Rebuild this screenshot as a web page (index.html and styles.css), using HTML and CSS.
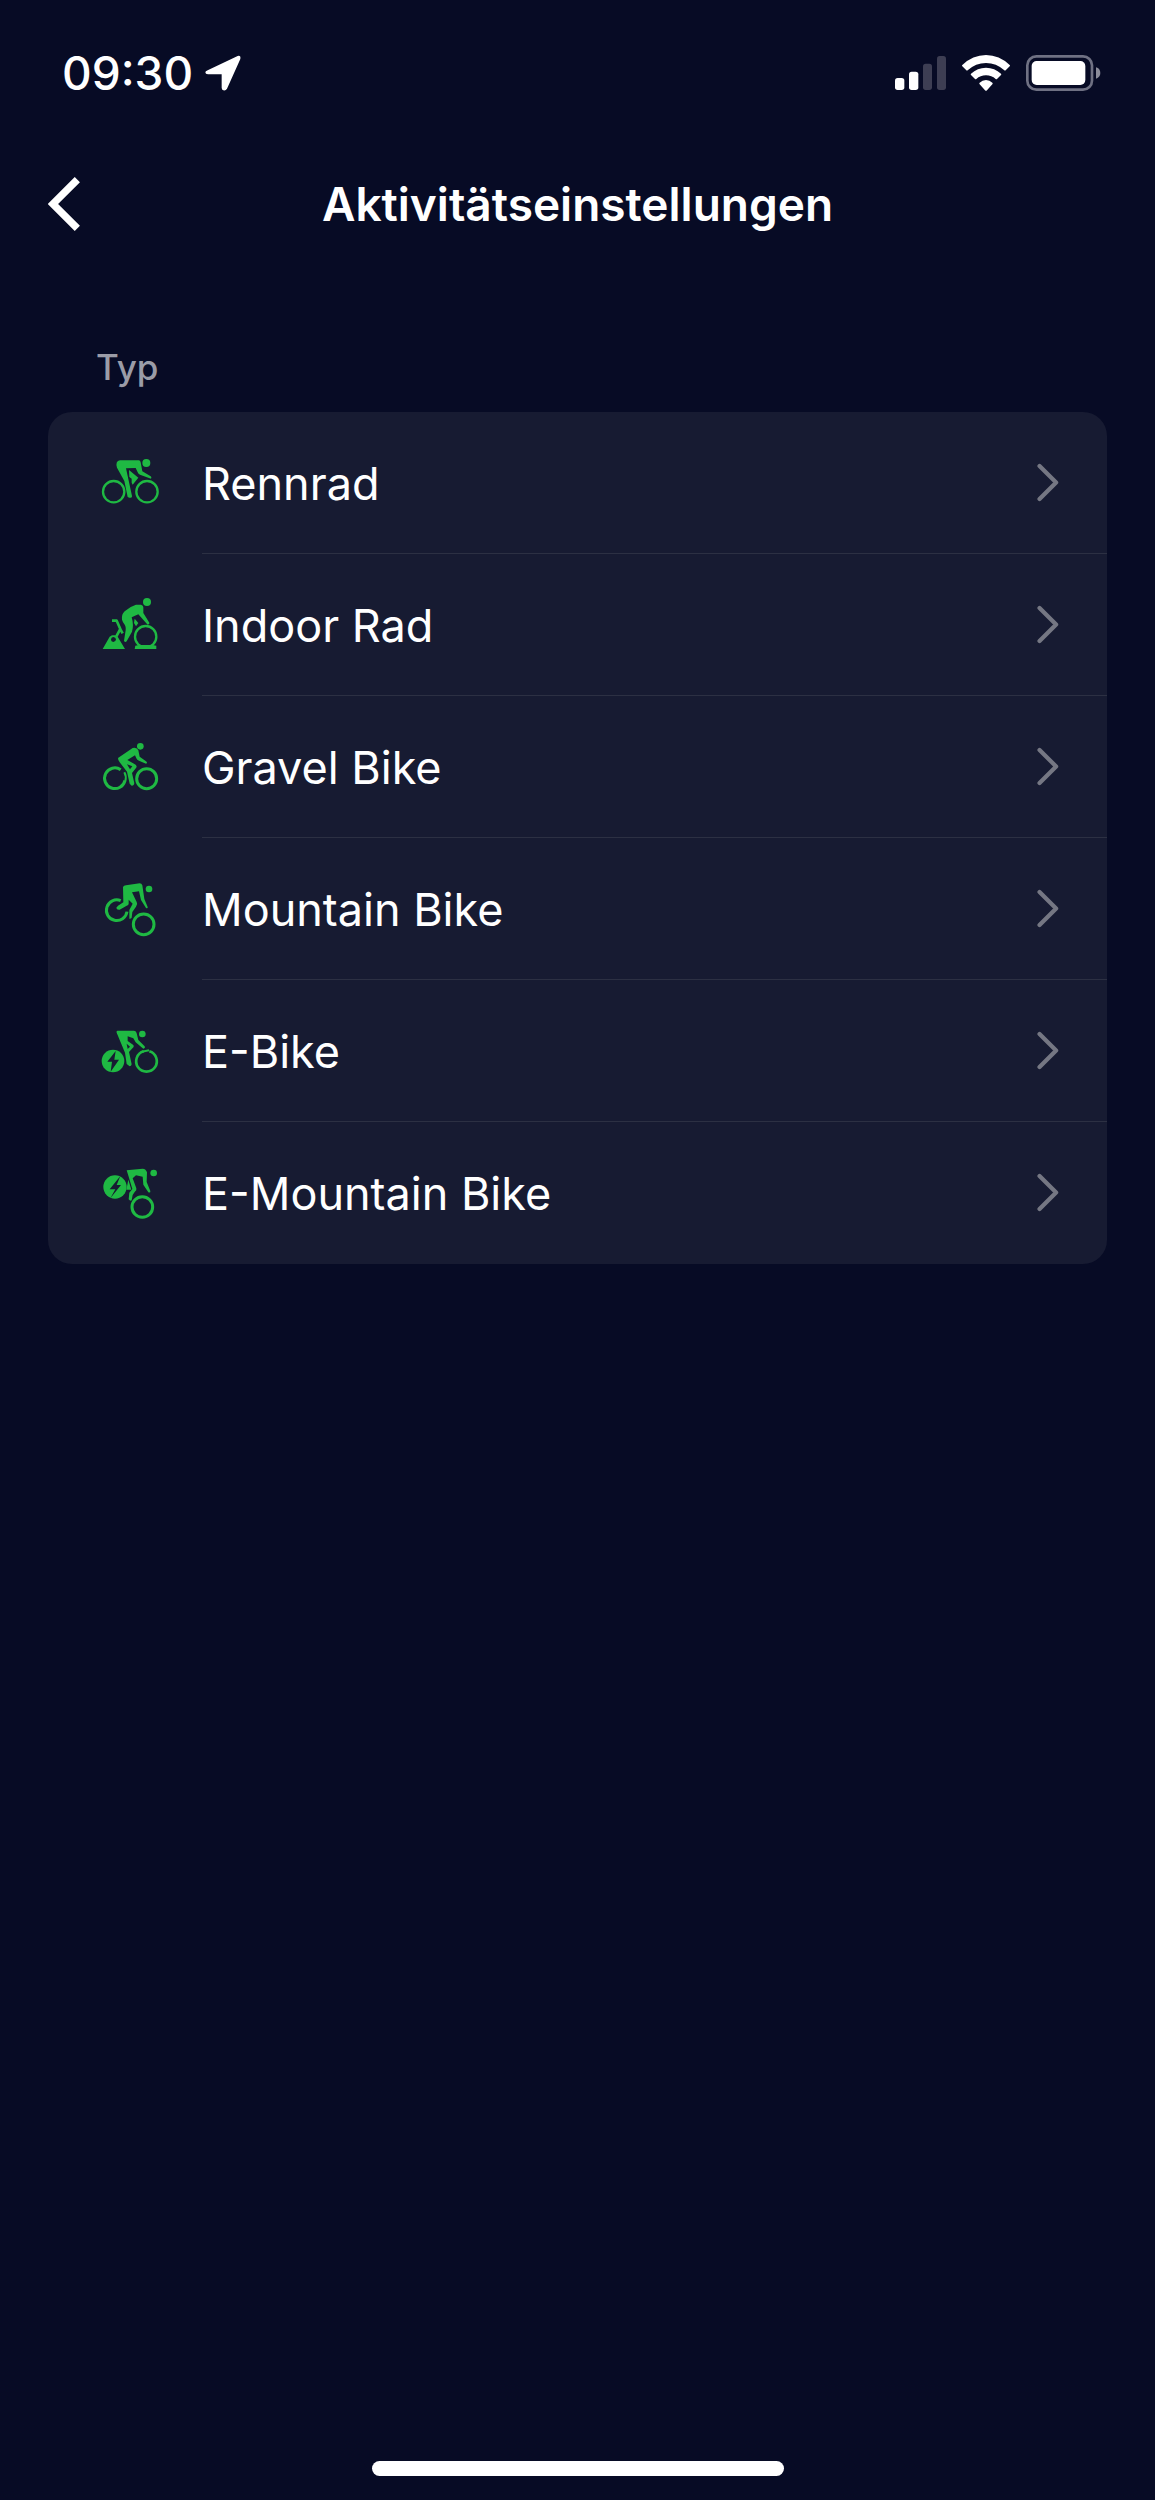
FILE: index.html
```html
<!DOCTYPE html>
<html lang="de">
<head>
<meta charset="utf-8">
<meta name="viewport" content="width=device-width, initial-scale=1">
<title>Aktivitätseinstellungen</title>
<link rel="stylesheet" href="styles.css">
</head>
<body>
<div class="status-bar">
  <div class="status-left">
    <time>09:30</time>
    <svg width="36" height="36" viewBox="0 0 108 108" aria-hidden="true"><path d="M8 46L98 3Q108 0 106 12L66 101Q62 108 55 106Q50 105 50 98V58H9Q1 58 1 52Q1 49 8 46Z" fill="#fff"/></svg>
  </div>
  <div class="status-right">
    <svg width="51" height="36" viewBox="0 -3 153 108" aria-hidden="true">
      <rect x="0" y="66" width="28" height="36" rx="8" fill="#fff"/><rect x="42" y="47" width="28" height="55" rx="8" fill="#fff"/>
      <rect x="84" y="23" width="27" height="79" rx="8" fill="#3d3e53"/><rect x="126" y="0" width="27" height="102" rx="8" fill="#3d3e53"/>
    </svg>
    <svg width="48" height="36" viewBox="0 0 144 108" aria-hidden="true" fill="#fff">
      <path d="M1 30Q32 0 72 0T143 30Q145 32 143 34L131 46Q129 48 127 46Q103 24 72 24T17 46Q15 48 13 46L1 34Q-1 32 1 30Z"/>
      <path d="M27 56Q46 38 72 38T117 56Q119 58 117 60L105 72Q103 74 101 72Q89 61 72 61T43 72Q41 74 39 72L27 60Q25 58 27 56Z"/>
      <path d="M53 83Q61 75 72 75T91 83Q93 85 91 88L75 106Q72 109 69 106L53 88Q51 85 53 83Z"/>
    </svg>
    <svg width="75" height="36" viewBox="0 0 225 108" aria-hidden="true">
      <rect x="4" y="4" width="194" height="100" rx="27" fill="none" stroke="#6f7183" stroke-width="8"/>
      <rect x="17" y="18" width="161" height="72" rx="15" fill="#fff"/><path d="M210 37Q223 41 223 54T210 71Z" fill="#8b8c9a"/>
    </svg>
  </div>
</div>
<header class="nav-bar">
  <button class="back" type="button" aria-label="Zurück">
    <svg width="33" height="54" viewBox="0 0 99 162" aria-hidden="true"><path d="M88 8L15 81L88 154" fill="none" stroke="#fff" stroke-width="22"/></svg>
  </button>
  <h1>Aktivitätseinstellungen</h1>
</header>
<main>
  <h2>Typ</h2>
  <ul class="list">
    <li><a href="#rennrad">
      <svg class="icon" viewBox="0 9 240 210" aria-hidden="true">
        <g fill="none" stroke-width="7"><circle cx="71" cy="140" r="32"/><circle cx="171" cy="140" r="32"/></g>
        <g stroke="none"><circle cx="169" cy="54" r="12"/><path d="M90 46H146Q151 46 152 52L157 79L182 94Q186 97 183 101L150 89Q145 87 143 82L137 69L108 70L126 153Q127 158 122 158H118L113 156L103 108L81 68Q75 49 90 46Z"/><path d="M117 75L145 98L128 119L125 113V101L118 96Z"/></g>
      </svg><span class="label">Rennrad</span><svg class="chevron" viewBox="0 0 66 120" aria-hidden="true"><path d="M7 9L58 60L7 111"/></svg></a></li>
    <li><a href="#indoor-rad">
      <svg class="icon" viewBox="0 9 240 210" aria-hidden="true">
        <circle cx="167" cy="149" r="32" fill="none" stroke-width="7"/>
        <g stroke="none"><circle cx="171" cy="45" r="12"/><path d="M96 98Q94 82 104 73Q120 58 138 53H153Q160 55 160 61V78L178 107Q180 112 173 113L145 82L125 91Q132 114 126 134L110 163Q105 168 102 161L107 130Q109 117 99 106Z"/><path d="M134 95L145 108L138 118L132 108Z"/><path d="M136 176L146 174H188L199 176V186H134Z"/><path fill-rule="evenodd" d="M38 186L59 149L66 145H76L83 149L105 186ZM70 150Q63 151 63 158Q63 164 70 165Q78 164 78 157Q77 151 70 150Z"/></g>
        <path d="M66 101H80L91 126L79 148M90 125L98 139" fill="none" stroke-width="8" stroke-linejoin="round"/>
      </svg><span class="label">Indoor Rad</span><svg class="chevron" viewBox="0 0 66 120" aria-hidden="true"><path d="M7 9L58 60L7 111"/></svg></a></li>
    <li><a href="#gravel-bike">
      <svg class="icon" viewBox="0 6 240 210" aria-hidden="true">
        <g fill="none" stroke-width="9"><path d="M92 119A31 31 0 1 0 105 151"/><circle cx="170" cy="146" r="30"/></g>
        <path d="M103 127Q110 139 106 153" fill="none" stroke-width="6"/>
        <g stroke="none"><circle cx="151" cy="49" r="10"/><path d="M84 84L128 54Q141 51 145 61L149 80L168 94Q174 99 168 101L147 92Q141 90 139 85L135 76L112 90L132 101Q144 107 138 114L126 129L133 160Q132 168 125 167L119 161L111 125L89 97Q84 92 84 84Z"/></g>
        <path class="cutout" d="M111 103L127 109L120 118Z"/>
      </svg><span class="label">Gravel Bike</span><svg class="chevron" viewBox="0 0 66 120" aria-hidden="true"><path d="M7 9L58 60L7 111"/></svg></a></li>
    <li><a href="#mountain-bike">
      <svg class="icon" viewBox="0 3 240 210" aria-hidden="true">
        <g fill="none" stroke-width="9"><path d="M92 83A31 31 0 1 0 111 116"/><circle cx="161" cy="154" r="31"/></g>
        <g stroke="none"><circle cx="177" cy="48" r="10"/><path d="M99 42Q101 37 108 37L149 31Q155 31 157 37L163 78L173 102Q174 107 168 105L153 81L147 55L126 58L140 87Q144 93 138 101L127 117L125 134Q123 138 118 137V111L128 92L116 80V92Q116 96 110 98L89 110Q79 111 79 104L84 98L100 88Z"/></g>
      </svg><span class="label">Mountain Bike</span><svg class="chevron" viewBox="0 0 66 120" aria-hidden="true"><path d="M7 9L58 60L7 111"/></svg></a></li>
    <li><a href="#e-bike">
      <svg class="icon" viewBox="0 0 240 210" aria-hidden="true">
        <path d="M178 106A31 31 0 1 1 161 106" fill="none" stroke-width="8"/><path d="M156 107L177 103" stroke-width="6"/>
        <g stroke="none"><circle cx="69" cy="135" r="34"/><circle cx="157" cy="54" r="10"/><path d="M82 44H132Q139 45 140 52L145 72L164 91Q167 97 160 98L137 79L130 67L113 61L113 75L129 86Q134 90 128 96L117 108L125 145Q124 151 119 151L110 144L105 110L80 50Q78 46 82 44Z"/></g>
        <path class="cutout" d="M77 105L52 137H66L62 167L87 131H73Z"/><path class="cutout" d="M110 83L120 92L113 99Z"/>
      </svg><span class="label">E-Bike</span><svg class="chevron" viewBox="0 0 66 120" aria-hidden="true"><path d="M7 9L58 60L7 111"/></svg></a></li>
    <li><a href="#e-mountain-bike">
      <svg class="icon" viewBox="0 0 240 210" aria-hidden="true">
        <circle cx="157" cy="147" r="31" fill="none" stroke-width="9"/>
        <g stroke="none"><circle cx="75" cy="87" r="35"/><circle cx="191" cy="45" r="10"/><path d="M110 37L158 32Q168 33 171 43L170 72L181 99Q182 105 175 103L160 80L158 56L138 52L128 61L139 91Q141 97 134 102L128 111L125 127Q121 131 116 124L118 104L127 93L116 56Z"/><path d="M115 65L124 95H109Z"/></g>
        <path class="cutout" d="M91 54L59 94H76L61 121L93 81H80Z"/>
      </svg><span class="label">E-Mountain Bike</span><svg class="chevron" viewBox="0 0 66 120" aria-hidden="true"><path d="M7 9L58 60L7 111"/></svg></a></li>
  </ul>
</main>
<div class="home-indicator"></div>
</body>
</html>
```
FILE: styles.css
```css
* { box-sizing: border-box; }

body {
  margin: 0;
  min-height: 100vh;
  display: flex;
  flex-direction: column;
  background: #070b25;
  color: #fff;
  font-family: Inter, "Liberation Sans", sans-serif;
}

svg { display: block; flex: none; }

.status-bar {
  display: flex;
  justify-content: space-between;
  align-items: center;
  height: 146px;
  padding: 0 54px 0 62px;
}

.status-left { display: flex; align-items: center; gap: 12px; }
.status-left time { font-size: 46px; font-weight: 500; line-height: 56px; }
.status-right { display: flex; align-items: center; gap: 16px; }

.nav-bar {
  display: grid;
  grid-template-columns: 48px 1fr 48px;
  align-items: center;
  height: 116px;
  padding: 0 48px;
}

.back { padding: 0; border: 0; background: none; }

h1 {
  margin: 0;
  font-size: 46px;
  font-weight: 600;
  line-height: 56px;
  text-align: center;
  white-space: nowrap;
}

main { padding: 82px 48px 48px; }

h2 {
  margin: 0 0 22px;
  padding-left: 48px;
  color: #9b9ca7;
  font-size: 35px;
  font-weight: 500;
  line-height: 46px;
}

.list {
  margin: 0;
  padding: 0;
  list-style: none;
  border-radius: 24px;
  background: #171b32;
}

.list a {
  display: flex;
  align-items: center;
  padding-left: 42px;
  color: inherit;
  text-decoration: none;
}

.icon {
  width: 80px;
  height: 70px;
  margin-right: 32px;
  fill: #1fb943;
  stroke: #1fb943;
}

.cutout { fill: #171b32; stroke: none; }

.label {
  flex: 1;
  padding-top: 2px;
  font-size: 45px;
  line-height: 139px;
  border-bottom: 1px solid #2c3043;
}

.chevron {
  align-self: stretch;
  width: 70px;
  height: 142px;
  padding: 51px 48px 51px 0;
  border-bottom: 1px solid #2c3043;
  fill: none;
  stroke: #757783;
  stroke-width: 13;
  stroke-linecap: round;
  stroke-linejoin: round;
}

.list li:last-child .label,
.list li:last-child .chevron { border-bottom-color: transparent; }

.home-indicator {
  width: 36%;
  max-width: 412px;
  height: 15px;
  margin: auto auto 24px;
  border-radius: 8px;
  background: #fff;
}
```
